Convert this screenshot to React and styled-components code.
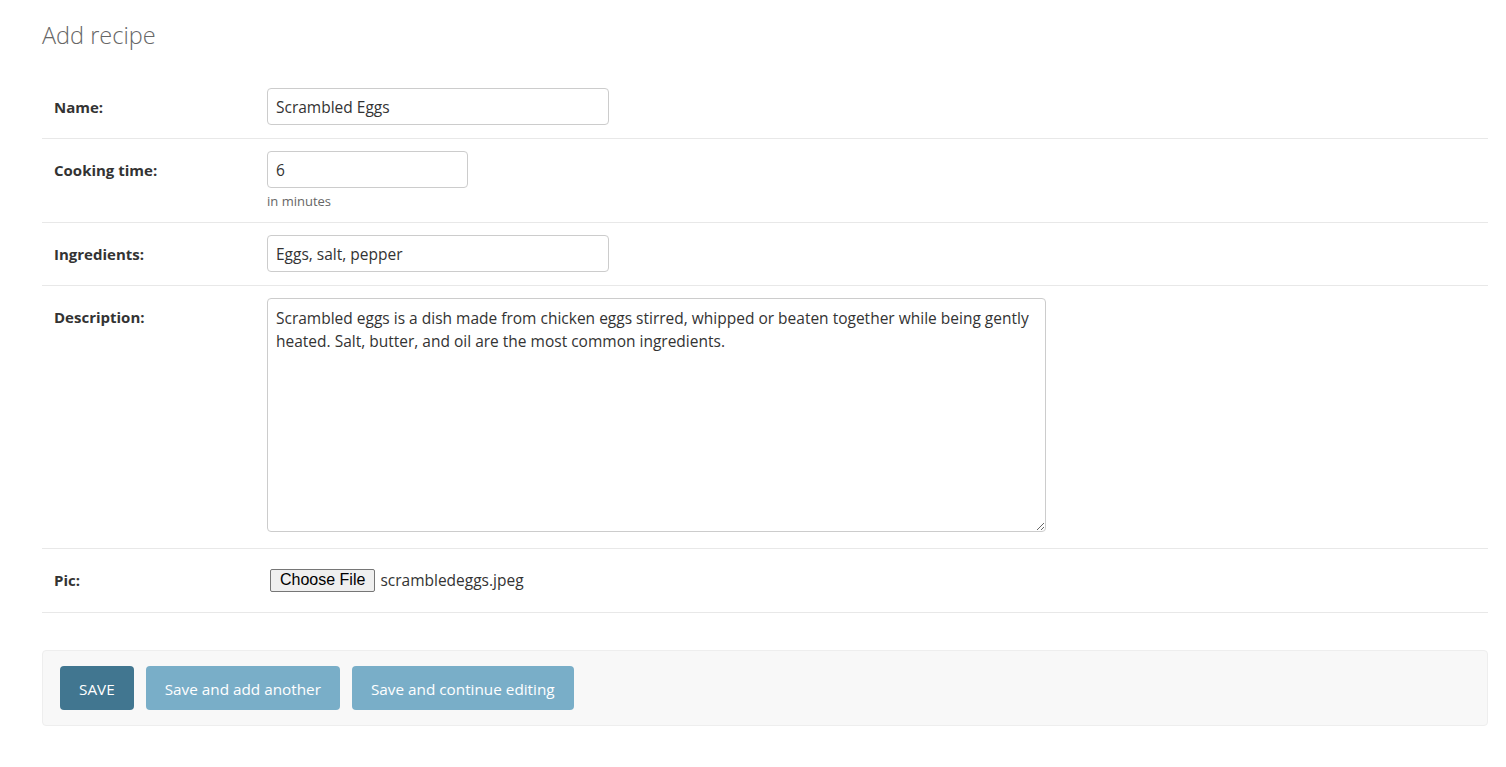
import React from 'react';
import styled, {createGlobalStyle} from 'styled-components';

const GlobalStyle = createGlobalStyle`
  body {
    margin: 0;
    background: #fff;
    color: #333;
    font-family: "Open Sans", "Noto Sans", sans-serif;
    font-size: 15px;
  }
`;

const Page = styled.div`
  padding: 20px 18px 40px 42px;
`;

const Title = styled.h1`
  margin: 0 0 26px;
  font-size: 23.5px;
  line-height: 30px;
  font-weight: 300;
  color: #666;
`;

const Fieldset = styled.div`
  display: flex;
  flex-direction: column;
`;

const Row = styled.div`
  display: flex;
  padding: 12px 12px 13px;
  border-bottom: 1px solid #e8e8e8;
`;

const Label = styled.label`
  width: 213px;
  flex-shrink: 0;
  padding-top: 10px;
  line-height: 18px;
  font-size: 15px;
  font-weight: 700;
  color: #333;
`;

const Field = styled.div`
  display: flex;
  flex-direction: column;
  align-items: flex-start;
  min-height: 37px;
  justify-content: ${p => (p.center ? 'center' : 'flex-start')};
`;

const TextInput = styled.input`
  box-sizing: border-box;
  width: ${p => p.width}px;
  height: 37px;
  padding: 0 8px;
  border: 1px solid #ccc;
  border-radius: 4px;
  font-family: inherit;
  font-size: 15.5px;
  color: #333;
  background: #fff;
  outline: none;
`;

const Help = styled.div`
  margin-top: 5px;
  font-size: 13px;
  line-height: 16px;
  color: #666;
`;

const TextArea = styled.textarea`
  display: block;
  box-sizing: border-box;
  width: 779px;
  height: 234px;
  margin-bottom: 3px;
  padding: 8px 8px 6px;
  border: 1px solid #ccc;
  border-radius: 4px;
  font-family: inherit;
  font-size: 15.5px;
  line-height: 23px;
  color: #333;
  resize: both;
  outline: none;
`;

const FileWrap = styled.div`
  display: flex;
  align-items: center;
  gap: 5px;
  height: 38px;
  padding-left: 3px;
`;

const FileButton = styled.button`
  box-sizing: border-box;
  height: 23px;
  padding: 0 9px;
  border: 1px solid #767676;
  border-radius: 2px;
  background: #efefef;
  font-family: "Liberation Sans", Arial, sans-serif;
  font-size: 16px;
  color: #000;
`;

const FileName = styled.span`
  font-size: 15.5px;
  color: #333;
`;

const SubmitRow = styled.div`
  display: flex;
  gap: 12px;
  margin-top: 37px;
  padding: 15px 17px;
  background: #f8f8f8;
  border: 1px solid #eee;
  border-radius: 4px;
`;

const Button = styled.button`
  height: 44px;
  padding: 1px 19px 0;
  border: none;
  border-radius: 4px;
  background: ${p => (p.primary ? '#417690' : '#79aec8')};
  color: #fff;
  font-family: inherit;
  font-size: 15.3px;
  cursor: pointer;
`;

const App = () => {
    return (
        <>
            <GlobalStyle/>
            <Page>
                <Title>Add recipe</Title>
                <Fieldset>
                    <Row>
                        <Label>Name:</Label>
                        <Field><TextInput width={342} defaultValue="Scrambled Eggs"/></Field>
                    </Row>
                    <Row>
                        <Label>Cooking time:</Label>
                        <Field>
                            <TextInput width={201} defaultValue="6"/>
                            <Help>in minutes</Help>
                        </Field>
                    </Row>
                    <Row>
                        <Label>Ingredients:</Label>
                        <Field><TextInput width={342} defaultValue="Eggs, salt, pepper"/></Field>
                    </Row>
                    <Row>
                        <Label>Description:</Label>
                        <Field>
                            <TextArea defaultValue="Scrambled eggs is a dish made from chicken eggs stirred, whipped or beaten together while being gently heated. Salt, butter, and oil are the most common ingredients."/>
                        </Field>
                    </Row>
                    <Row>
                        <Label>Pic:</Label>
                        <Field center>
                            <FileWrap>
                                <FileButton type="button">Choose File</FileButton>
                                <FileName>scrambledeggs.jpeg</FileName>
                            </FileWrap>
                        </Field>
                    </Row>
                </Fieldset>
                <SubmitRow>
                    <Button primary>SAVE</Button>
                    <Button>Save and add another</Button>
                    <Button>Save and continue editing</Button>
                </SubmitRow>
            </Page>
        </>
    );
};

export default App;
